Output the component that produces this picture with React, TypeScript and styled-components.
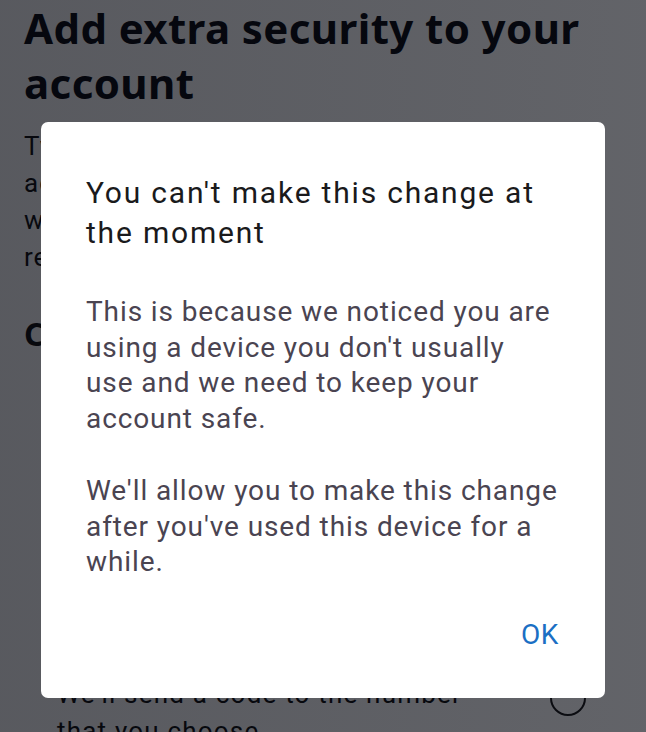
import React from "react";
import styled, { createGlobalStyle } from "styled-components";

const Global = createGlobalStyle`
  html, body { margin: 0; padding: 0; }
  body { width: 646px; height: 732px; overflow: hidden; background: #ffffff; }
  #root { width: 646px; height: 732px; }
`;

const Page = styled.div`
  position: relative;
  width: 646px;
  height: 732px;
  overflow: hidden;
  background: #ffffff;
  font-family: "Noto Sans", "Open Sans", sans-serif;
  color: #111216;
`;

const Content = styled.div`
  display: flex;
  flex-direction: column;
  padding: 0 24px 0 24px;
`;

const Heading = styled.h1`
  margin: 0;
  font-family: "Noto Sans", sans-serif;
  font-weight: 700;
  font-size: 42px;
  line-height: 55px;
  letter-spacing: 0.4px;
  color: #0c0d12;
`;

const Intro = styled.p`
  margin: 18px 0 0 0;
  max-width: 540px;
  font-family: Roboto, sans-serif;
  font-size: 26px;
  line-height: 37px;
  letter-spacing: 1px;
  color: #111;
`;

const SubHeading = styled.h2`
  margin: 37px 0 0 0;
  font-family: "Noto Sans", sans-serif;
  font-weight: 700;
  font-size: 32px;
  line-height: 42px;
  color: #111;
`;

const OptionRow = styled.div`
  display: flex;
  align-items: flex-start;
  justify-content: space-between;
  margin-top: 321px;
  padding: 0 36px 0 33px;
`;

const OptionText = styled.p`
  margin: 0;
  font-family: Roboto, sans-serif;
  font-size: 26px;
  line-height: 37px;
  letter-spacing: 1.2px;
  color: #111;
  width: 440px;
`;

const Radio = styled.span`
  flex: none;
  width: 32px;
  height: 32px;
  border-radius: 50%;
  border: 2.5px solid #1a1a1a;
  margin-top: 4px;
`;

const Scrim = styled.div`
  position: absolute;
  inset: 0;
  background: linear-gradient(90deg, rgba(2, 4, 12, 0.66) 0%, rgba(2, 4, 12, 0.62) 100%);
  display: flex;
  align-items: flex-start;
  justify-content: center;
`;

const Dialog = styled.div`
  margin-top: 122px;
  width: 564px;
  height: 576px;
  box-sizing: border-box;
  background: #ffffff;
  border-radius: 7px;
  padding: 51px 46px 0 45px;
  display: flex;
  flex-direction: column;
  font-family: Roboto, sans-serif;
`;

const Title = styled.h3`
  margin: 0;
  font-weight: 400;
  font-size: 30px;
  line-height: 40px;
  letter-spacing: 1.8px;
  color: #1a1a1c;
`;

const Body = styled.p<{ $first?: boolean }>`
  margin: ${(p) => (p.$first ? "41px" : "37px")} 0 0 0;
  font-size: 28px;
  line-height: 35.5px;
  letter-spacing: 0.9px;
  color: #4a4451;
`;

const Actions = styled.div`
  display: flex;
  justify-content: flex-end;
  margin-top: 37px;
`;

const OkButton = styled.button`
  border: none;
  background: transparent;
  padding: 0;
  font-family: Roboto, sans-serif;
  font-size: 28px;
  line-height: 35.5px;
  letter-spacing: 0.6px;
  color: #1b6fc4;
  cursor: pointer;
`;

export default function App() {
  return (
    <>
      <Global />
      <Page>
        <Content>
          <Heading>Add extra security to your account</Heading>
          <Intro>
            Two-factor authentication protects your account by requiring an additional code
            when you log in on a device that we don't recognise.
          </Intro>
          <SubHeading>Choose your security method</SubHeading>
          <OptionRow>
            <OptionText>We'll send a code to the number that you choose</OptionText>
            <Radio />
          </OptionRow>
        </Content>
        <Scrim>
          <Dialog role="dialog">
            <Title>You can't make this change at the moment</Title>
            <Body $first>
              This is because we noticed you are using a device you don't usually use and we
              need to keep your account safe.
            </Body>
            <Body>
              We'll allow you to make this change after you've used this device for a while.
            </Body>
            <Actions>
              <OkButton>OK</OkButton>
            </Actions>
          </Dialog>
        </Scrim>
      </Page>
    </>
  );
}
